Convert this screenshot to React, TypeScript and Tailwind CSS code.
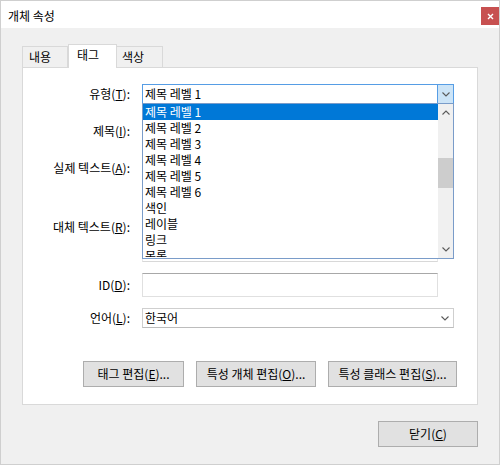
import React from 'react';

const FONT = { fontFamily: '"Noto Sans CJK KR", "Noto Sans", sans-serif' };

const Chevron = ({ up = false }: { up?: boolean }) => (
  <svg width="8" height="5" viewBox="0 0 8 5">
    <polyline
      points={up ? '0.5,4.5 4,1 7.5,4.5' : '0.5,0.5 4,4 7.5,0.5'}
      fill="none"
      stroke="#5a5a5a"
      strokeWidth="1.1"
    />
  </svg>
);

// label with an underlined access key, e.g. 유형(T):
const Label = ({ text, k, className = '' }: { text: string; k: string; className?: string }) => (
  <div className={`w-[107px] shrink-0 text-right text-[12px] leading-[20px] ${className}`}>
    {text}(<u>{k}</u>):
  </div>
);

const items = ['제목 레벨 1', '제목 레벨 2', '제목 레벨 3', '제목 레벨 4', '제목 레벨 5', '제목 레벨 6', '색인', '레이블', '링크', '목록'];

const Button = ({ text, k, w }: { text: string; k: string; w: string }) => (
  <div className={`${w} h-[26px] flex items-center justify-center bg-[#e1e1e1] border border-[#adadad] text-[12px]`}>
    {text}(<u>{k}</u>)...
  </div>
);

export default function App() {
  return (
    <div className="w-[500px] h-[465px] border border-[#cfcfcf] bg-[#f0f0f0] flex flex-col text-black" style={FONT}>
      {/* title bar */}
      <div className="h-[27px] bg-white flex justify-between items-start">
        <div className="pl-[7px] pt-[7px] text-[12px] leading-[16px]">개체 속성</div>
        <div className="mt-[6px] w-[18px] h-[18px] bg-[#c75050] flex items-center justify-center">
          <svg width="7" height="7" viewBox="0 0 7 7">
            <path d="M1 1L6 6M6 1L1 6" stroke="white" strokeWidth="1.4" />
          </svg>
        </div>
      </div>

      <div className="flex-1 flex flex-col px-[21px] pt-[16px]">
        {/* tabs */}
        <div className="h-[23px] flex items-end">
          <div className="w-[46px] h-[21px] border border-b-0 border-[#d9d9d9] bg-[#f0f0f0] text-[12px] leading-[19px] pl-[6px]">내용</div>
          <div className="relative z-10 -mb-px w-[49px] h-[24px] border border-b-0 border-[#d9d9d9] bg-white text-[12px] leading-[20px] pl-[8px]">태그</div>
          <div className="w-[46px] h-[21px] border border-l-0 border-b-0 border-[#d9d9d9] bg-[#f0f0f0] text-[12px] leading-[19px] pl-[5px]">색상</div>
        </div>

        {/* tab page */}
        <div className="h-[338px] border border-[#d9d9d9] bg-white pt-[16px] flex flex-col">
          <div className="flex">
            <Label text="유형" k="T" />
            <div className="relative ml-[12px] w-[312px] h-[20px] border border-[#569de5] flex z-10">
              <div className="flex-1 pl-[2px] text-[12px] leading-[18px]">제목 레벨 1</div>
              <div className="w-[16px] bg-[#cce4f7] border-l border-[#569de5] flex items-center justify-center">
                <Chevron />
              </div>
              {/* open list */}
              <div className="absolute left-[-1px] top-[18px] w-[312px] h-[156px] border border-[#7a9cc9] bg-white flex">
                <div className="flex-1 overflow-hidden">
                  {items.map((it, i) => (
                    <div
                      key={it}
                      className={`h-[16px] pl-[2px] text-[12px] leading-[16px] ${i === 0 ? 'bg-[#0078d7] text-white' : ''}`}
                    >
                      {it}
                    </div>
                  ))}
                </div>
                <div className="w-[15px] bg-[#f0f0f0] flex flex-col">
                  <div className="h-[17px] flex items-center justify-center">
                    <Chevron up />
                  </div>
                  <div className="mt-[37px] h-[30px] bg-[#cdcdcd]" />
                  <div className="mt-auto h-[17px] flex items-center justify-center">
                    <Chevron />
                  </div>
                </div>
              </div>
            </div>
          </div>

          <div className="flex mt-[16px]">
            <Label text="제목" k="I" className="mt-[1px]" />
            <div className="ml-[12px] w-[296px] h-[22px] border border-[#e0e0e0] border-t-[#b0b0b0]" />
          </div>

          <div className="flex mt-[14px]">
            <Label text="실제 텍스트" k="A" className="mt-[2px]" />
            <div className="ml-[12px] w-[296px] h-[56px] border border-[#e0e0e0] border-t-[#b0b0b0]" />
          </div>

          <div className="flex mt-[4px]">
            <Label text="대체 텍스트" k="R" className="mt-[1px]" />
            <div className="ml-[12px] w-[296px] h-[46px] border border-[#e8e8e8] border-b-[#d8d8d8]" />
          </div>

          <div className="flex items-center mt-[11px]">
            <Label text="ID" k="D" />
            <div className="ml-[12px] w-[296px] h-[24px] border border-[#e0e0e0] border-t-[#a8a8a8]" />
          </div>

          <div className="flex items-center mt-[11px]">
            <Label text="언어" k="L" />
            <div className="ml-[12px] w-[312px] h-[20px] border border-[#cfcfcf] border-b-[#bcbcbc] flex items-center">
              <div className="flex-1 pl-[2px] text-[12px] leading-[18px]">한국어</div>
              <div className="w-[16px] flex items-center justify-center">
                <Chevron />
              </div>
            </div>
          </div>

          <div className="flex gap-3 mt-[33px] pl-[60px]">
            <Button text="태그 편집" k="E" w="w-[101px]" />
            <Button text="특성 개체 편집" k="O" w="w-[120px]" />
            <Button text="특성 클래스 편집" k="S" w="w-[129px]" />
          </div>
        </div>

        <div className="self-end mt-[16px] w-[100px] h-[26px] flex items-center justify-center bg-[#e1e1e1] border border-[#adadad] text-[12px]">
          닫기(<u>C</u>)
        </div>
      </div>
    </div>
  );
}
